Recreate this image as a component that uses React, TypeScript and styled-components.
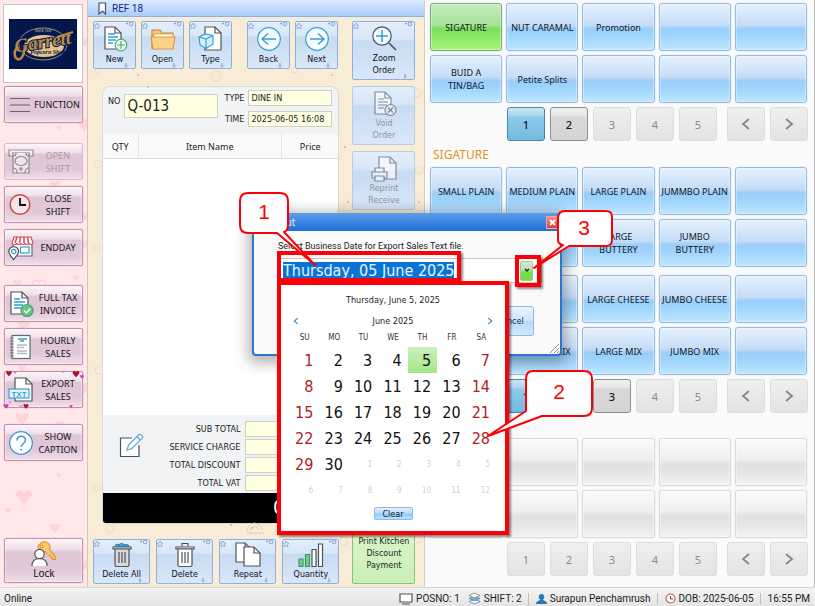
import React from "react";
import styled, { createGlobalStyle, css } from "styled-components";

const UI = `"DejaVu Sans Condensed", "Noto Sans", sans-serif`;
const LABEL = `"Noto Sans", "Open Sans", sans-serif`;
const WIDE = `"DejaVu Sans", sans-serif`;
const NARROW = `Roboto, "Noto Sans", sans-serif`;

const Global = createGlobalStyle`
  * { box-sizing: border-box; }
  html, body { margin: 0; padding: 0; }
  body { font-family: ${UI}; font-size: 9px; color: #1c1c24; background: #fafafa; }
  button, input { font: inherit; color: inherit; }
  button { cursor: pointer; padding: 0; margin: 0; }
  svg { display: block; flex: none; }
`;

const Screen = styled.div`
  position: relative;
  min-height: 100vh;
  display: flex;
  flex-direction: column;
  overflow: hidden;
`;
const Main = styled.main`
  flex: 1;
  display: grid;
  grid-template-columns: 88px minmax(0, 337fr) minmax(0, 390fr);
`;

/* ---------- sidebar ---------- */
const Sidebar = styled.nav`
  position: relative;
  display: flex;
  flex-direction: column;
  gap: 6px;
  padding: 4px 4px 4px 4px;
  background: #ffe8e9;
  border-right: 1px solid #d5c6b8;
`;
const Decor = styled.svg`
  position: absolute;
  inset: 0;
  width: 100%;
  height: 100%;
  pointer-events: none;
`;
const LogoBox = styled.div`
  position: relative;
  height: 79px;
  margin: 0 0 -3px -1px;
  width: 80px;
  background: #fff;
  border: 1px solid #cfc0c4;
  display: flex;
  align-items: center;
  justify-content: center;
`;
const SideButton = styled.button<{ $tall?: boolean; $gap?: number }>`
  position: relative;
  width: 79px;
  height: ${(p) => (p.$tall ? 45 : 37)}px;
  margin-top: ${(p) => p.$gap ?? 0}px;
  display: flex;
  flex-direction: ${(p) => (p.$tall ? "column" : "row")};
  align-items: center;
  justify-content: ${(p) => (p.$tall ? "center" : "flex-start")};
  padding: 0 2px 0 3px;
  gap: ${(p) => (p.$tall ? 0 : 2)}px;
  border: 1px solid #c08fae;
  border-radius: 2px;
  background: linear-gradient(#fdf5f9 0%, #f0dfe9 24%, #dfc6d6 30%, #e0c8d8 72%, #f0dfea 100%);
  box-shadow: inset 0 0 0 1px rgba(255, 255, 255, 0.4), 0 0 1px #b98aa6;
  color: #14101c;
  font-family: ${LABEL};
  font-size: ${(p) => (p.$tall ? 10 : 9)}px;
  line-height: 13px;
  &:disabled {
    color: #b397a6;
    border-color: #d9b9cb;
    box-shadow: none;
    svg { opacity: 0.55; }
  }
`;
const SideLabel = styled.span`
  flex: 1;
  text-align: center;
  white-space: pre-line;
`;
const Spacer = styled.div`
  flex: 1;
`;
const Sparkle = styled.svg`
  position: absolute;
  inset: -2px;
  width: calc(100% + 4px);
  height: calc(100% + 4px);
  pointer-events: none;
`;

/* ---------- order area ---------- */
const OrderArea = styled.section`
  position: relative;
  display: flex;
  flex-direction: column;
  background: #f8ecd6;
  border-right: 1px solid #d8cdbb;
`;
const RefBar = styled.header`
  height: 17px;
  display: flex;
  align-items: center;
  gap: 5px;
  padding-left: 10px;
  background: linear-gradient(#dcebff, #a9cdfb);
  border-bottom: 1px solid #86b3ec;
  color: #14278c;
  font-family: ${NARROW};
  font-size: 10px;
`;
const OrderBody = styled.div`
  position: relative;
  flex: 1;
  display: flex;
  gap: 13px;
  padding: 4px 9px 3px 5px;
`;
const OrderLeft = styled.div`
  flex: 1;
  display: flex;
  flex-direction: column;
`;
const OrderRight = styled.div`
  width: 63px;
  display: flex;
  flex-direction: column;
  gap: 6px;
`;
const Row = styled.div<{ $gap?: number }>`
  display: flex;
  gap: ${(p) => p.$gap ?? 5}px;
`;
const Group = styled.div`
  display: flex;
  gap: 5px;
  margin-right: 10px;
`;
const toolSizes = {
  small: css`width: 43px; height: 48px;`,
  tall: css`width: 63px; height: 59px;`,
  wide: css`flex: 1; height: 45px;`,
};
const Tool = styled.button<{ $size: keyof typeof toolSizes }>`
  position: relative;
  ${(p) => toolSizes[p.$size]}
  display: flex;
  flex-direction: column;
  align-items: center;
  justify-content: center;
  gap: 1px;
  border: 1px solid #8fb0dc;
  border-radius: 2px;
  background: linear-gradient(#e3eefb 0%, #d8e6f8 30%, #c8dbf3 34%, #d9e7f9 100%);
  font-family: ${WIDE};
  font-size: 8px;
  line-height: 12px;
  white-space: pre-line;
  color: #10131a;
  &:disabled {
    color: #8d95a3;
    border-color: #b9cce6;
    svg { opacity: 0.6; }
  }
`;
const PayButton = styled.button`
  height: 60px;
  border: 1px solid #93bd7c;
  border-radius: 2px;
  background: linear-gradient(#daf5cb, #c9efb8);
  font-family: ${WIDE};
  font-size: 8px;
  line-height: 12px;
  white-space: pre;
  color: #20281c;
`;
const Corner = styled.svg`
  position: absolute;
  inset: 0;
  width: 100%;
  height: 100%;
`;

const Ticket = styled.div`
  flex: 1;
  margin: 17px 0 15px 9px;
  display: flex;
  flex-direction: column;
  border: 1px solid #d9d9d9;
  border-radius: 8px 8px 4px 4px;
  background: #f2f3f4;
  overflow: hidden;
`;
const TicketHead = styled.div`
  height: 47px;
  display: flex;
  gap: 4px;
  padding: 3px 6px 0 5px;
`;
const NoField = styled.label`
  display: flex;
  gap: 4px;
  padding-top: 4px;
  line-height: 14px;
`;
const FieldGrid = styled.div`
  flex: 1;
  display: grid;
  grid-template-columns: 22px 1fr;
  grid-auto-rows: 16px;
  row-gap: 5px;
  column-gap: 4px;
  align-items: center;
  font-size: 9px;
  label { text-align: right; }
`;
const Field = styled.input<{ $big?: boolean }>`
  min-width: 0;
  width: ${(p) => (p.$big ? 94 : 84)}px;
  height: ${(p) => (p.$big ? 24 : 16)}px;
  padding: 0 2px;
  border: 1px solid #cfd0c4;
  border-radius: 0;
  background: #ffffe1;
  font-size: ${(p) => (p.$big ? 15 : 9)}px;
`;
const Lines = styled.table`
  width: 100%;
  height: 25px;
  border-collapse: collapse;
  table-layout: fixed;
  background: #fafafa;
  font-family: ${LABEL};
  font-size: 9px;
  th {
    font-weight: 400;
    padding: 0;
    border-right: 1px solid #e4e4e4;
    border-bottom: 1px solid #dcdcdc;
  }
  th:first-child { width: 35px; }
  th:last-child { width: 57px; border-right: 0; }
`;
const LinesBody = styled.div`
  flex: 1;
  background: #fff;
`;
const Totals = styled.div`
  height: 78px;
  display: flex;
  align-items: center;
  padding: 3px 5px 0 16px;
`;
const IconButton = styled.button`
  border: 0;
  background: none;
  margin-bottom: 20px;
`;
const TotalsGrid = styled.div`
  flex: 1;
  display: grid;
  grid-template-columns: 1fr 88px;
  grid-auto-rows: 16px;
  gap: 2px 5px;
  align-items: center;
  label { text-align: right; white-space: nowrap; }
`;
const GrandTotal = styled.output`
  height: 30px;
  padding: 0 0 0 170px;
  background: #000;
  color: #fff;
  font-size: 20px;
  line-height: 28px;
`;

/* ---------- menu area ---------- */
const MenuArea = styled.section`
  display: flex;
  flex-direction: column;
  padding: 3px 7px 11px 5px;
  background: #fafafa;
  border-right: 1px solid #b9b9c0;
`;
const Tiles = styled.div<{ $loose?: boolean }>`
  display: grid;
  grid-template-columns: repeat(5, minmax(0, 1fr));
  grid-auto-rows: 48px;
  gap: 4px;
  margin-bottom: ${(p) => (p.$loose ? 8 : 4)}px;
`;
type Tone = "blue" | "green" | "gray";
const tones: Record<Tone, ReturnType<typeof css>> = {
  blue: css`
    border-color: #93bbe8;
    background: linear-gradient(#e6f1fd 0%, #c3dcf7 46%, #9bcdf9 54%, #9dd3fc 68%, #bfe6ff 100%);
  `,
  green: css`
    border-color: #75b06f;
    background: linear-gradient(#c6ecc0 0%, #a5e297 46%, #7ddd5c 54%, #8ae768 70%, #aaf57c 100%);
  `,
  gray: css`
    border-color: #dcdcdc;
    background: linear-gradient(#fbfbfb 0%, #eeeeee 46%, #e0e0e0 54%, #e6e6e6 75%, #f3f3f3 100%);
  `,
};
const Tile = styled.button<{ $tone: Tone }>`
  border: 1px solid;
  border-radius: 3px;
  ${(p) => tones[p.$tone]}
  box-shadow: inset 0 0 0 1px rgba(255, 255, 255, 0.35), 0 0 1px rgba(110, 150, 200, 0.6);
  font-family: ${LABEL};
  font-size: 9px;
  line-height: 13px;
  white-space: pre;
  color: #10161e;
`;
const Category = styled.h2`
  margin: 5px 0 3px 3px;
  height: 18px;
  font-family: ${LABEL};
  font-size: 12px;
  font-weight: 400;
  line-height: 18px;
  color: #e0912c;
`;
const Pager = styled.div`
  display: grid;
  grid-template-columns: repeat(5, 38fr) 0 repeat(2, 38fr);
  gap: 5px;
  margin: 0 -1px 0 77px;
`;
const pageStates = {
  current: css`
    border-color: #4f83a3;
    background: linear-gradient(#cbe7f6 0%, #a9d6ee 24%, #8ccbea 28%, #74b9df 100%);
    color: #10161e;
  `,
  ready: css`
    border-color: #8f8f8f;
    background: linear-gradient(#f1f1f1 0%, #e6e6e6 24%, #d8d8d8 28%, #d5d5d5 100%);
    color: #10161e;
  `,
  off: css`
    border-color: #dddddd;
    background: linear-gradient(#efefef, #e3e3e3);
    color: #8b8b8b;
  `,
};
type PageState = keyof typeof pageStates;
const PageButton = styled.button<{ $state: PageState }>`
  height: 34px;
  border: 1px solid;
  border-radius: 3px;
  ${(p) => pageStates[p.$state]}
  display: flex;
  align-items: center;
  justify-content: center;
  font-family: ${LABEL};
  font-size: 11px;
  font-weight: ${(p) => (p.$state === "off" ? 400 : 500)};
`;

/* ---------- status bar ---------- */
const StatusBar = styled.footer`
  height: 19px;
  display: flex;
  align-items: center;
  padding: 3px 5px 0 4px;
  background: linear-gradient(#f4f4f4, #e4e4e4);
  border-top: 1px solid #d6d6d6;
  font-family: ${NARROW};
  font-size: 10px;
  white-space: nowrap;
`;
const StatusItem = styled.span<{ $rule?: boolean }>`
  display: flex;
  align-items: center;
  gap: 3px;
  padding: 0 6px 0 ${(p) => (p.$rule ? 7 : 2)}px;
  border-left: ${(p) => (p.$rule ? "1px solid #bdbdbd" : "0")};
  &:last-child { padding-right: 0; }
`;

/* ---------- dialog ---------- */
const Dialog = styled.div`
  position: absolute;
  left: 252px;
  top: 213px;
  width: 310px;
  height: 143px;
  display: flex;
  flex-direction: column;
  border: 2px solid #2f74d0;
  border-top: 0;
  border-radius: 4px;
  background: #fafafa;
  box-shadow: 0 3px 14px 4px rgba(0, 0, 0, 0.3);
`;
const TitleBar = styled.div`
  height: 18px;
  margin: 0 -2px;
  padding: 0 3px 0 20px;
  display: flex;
  align-items: center;
  justify-content: space-between;
  border-radius: 4px 4px 0 0;
  background: linear-gradient(#5c9deb, #1f6fd8);
  color: #e8f1fc;
  font-size: 10px;
`;
const CloseButton = styled.button`
  width: 13px;
  height: 13px;
  display: flex;
  align-items: center;
  justify-content: center;
  border: 1px solid #f3a7a4;
  background: linear-gradient(#ee8e8a, #d6403d);
`;
const DialogBody = styled.div`
  flex: 1;
  display: flex;
  flex-direction: column;
  padding: 9px 18px 18px 24px;
`;
const DateLabel = styled.label`
  font-family: ${NARROW};
  line-height: 13px;
  white-space: nowrap;
`;
const DateBox = styled.div`
  display: flex;
  align-items: center;
  height: 25px;
  margin-top: 5px;
  padding: 1px 8px 1px 4px;
  background: #fff;
  border: 1px solid #c5c5c5;
`;
const DateInput = styled.div`
  flex: 1;
  display: flex;
  input {
    width: 171px;
    height: 18px;
    padding: 0;
    border: 0;
    background: #0a74d6;
    color: #e9f4ff;
    font-family: ${UI};
    font-size: 16px;
  }
`;
const DropButton = styled.button`
  width: 13px;
  height: 20px;
  display: flex;
  align-items: center;
  justify-content: center;
  border: 1px solid #a3c69a;
  border-radius: 2px;
  background: linear-gradient(#d5edcc 0%, #b5dfa4 45%, #7fda55 55%, #6fe03c 100%);
`;
const CancelButton = styled.button`
  align-self: flex-end;
  width: 48px;
  height: 30px;
  margin: auto 8px 0 0;
  border: 1px solid #8fb8e6;
  border-radius: 3px;
  background: linear-gradient(#edf5fe, #cfe4fb 48%, #b5d8fa 52%, #cfebff);
  color: #22303f;
`;
const Grip = styled.svg`
  position: absolute;
  right: 1px;
  bottom: 1px;
`;
const Calendar = styled.div`
  position: absolute;
  left: 281px;
  top: 285px;
  width: 224px;
  height: 246px;
  display: flex;
  flex-direction: column;
  align-items: center;
  padding: 9px 9px 0;
  background: #fff;
`;
const CalTitle = styled.div`
  line-height: 13px;
`;
const CalNav = styled.div`
  align-self: stretch;
  display: flex;
  justify-content: space-between;
  align-items: center;
  height: 14px;
  margin-top: 7px;
  button {
    width: 12px;
    height: 12px;
    display: flex;
    align-items: center;
    justify-content: center;
    border: 0;
    background: none;
  }
`;
const Days = styled.table`
  width: 206px;
  table-layout: fixed;
  border-collapse: collapse;
  th {
    height: 19px;
    padding: 0;
    font-weight: 400;
    font-size: 8px;
    color: #333;
  }
  td { padding: 0; height: 26px; }
`;
const Day = styled.button<{ $weekend: boolean; $other: boolean; $picked: boolean }>`
  width: 100%;
  height: 26px;
  padding: 0 6px 0 0;
  border: 0;
  text-align: right;
  font-size: ${(p) => (p.$other ? 8 : 16)}px;
  color: ${(p) => (p.$other ? "#cfcfcf" : p.$weekend ? "#b01c22" : "#101010")};
  background: ${(p) => (p.$picked ? "linear-gradient(#c9f1bd, #a5e588)" : "none")};
`;
const ClearButton = styled.button`
  width: 39px;
  height: 13px;
  margin-top: 4px;
  border: 1px solid #8fb8e6;
  border-radius: 2px;
  background: linear-gradient(#e3f0fd, #b9dbfa 45%, #8fcbf8 55%, #b7e2ff);
  line-height: 10px;
`;

/* ---------- callouts ---------- */
const Frame = styled.div<{ $x: number; $y: number; $w: number; $h: number }>`
  position: absolute;
  left: ${(p) => p.$x}px;
  top: ${(p) => p.$y}px;
  width: ${(p) => p.$w}px;
  height: ${(p) => p.$h}px;
  border: 4px solid #fb0007;
  box-shadow: 2px 2px 2px rgba(0, 0, 0, 0.45);
  pointer-events: none;
`;
const Callout = styled.svg<{ $x: number; $y: number }>`
  position: absolute;
  left: ${(p) => p.$x}px;
  top: ${(p) => p.$y}px;
  overflow: visible;
  pointer-events: none;
  path { fill: #fff; stroke: #fb0007; stroke-width: 2; stroke-linejoin: round; }
  text {
    fill: #fb0007;
    font-family: "Liberation Sans", sans-serif;
    font-size: 21px;
    text-anchor: middle;
  }
`;

/* ---------- icons ---------- */
const ink = "#4f5359";
const sky = "#3a9fd0";
const Svg = ({ w, h, children }: { w: number; h: number; children: React.ReactNode }) => (
  <svg width={w} height={h} viewBox={`0 0 ${w} ${h}`} fill="none" stroke={ink} strokeWidth="1.2" aria-hidden="true">
    {children}
  </svg>
);

const FunctionIcon = () => (
  <Svg w={24} h={24}><path d="M2 5.5h20M2 12h20M2 18.500h20" stroke="#6d6470" /></Svg>
);
const OpenShiftIcon = () => (
  <Svg w={26} h={26}>
    <path d="M5 7H1V1h24v6h-4" fill="#fff" /><path d="M4 4h18" />
    <path d="M5 4v20h16V4" fill="#fff" /><ellipse cx="13" cy="12" rx="6" ry="4.500" />
    <path d="M5 19c3 0 4 2 4 5M21 19c-3 0-4 2-4 5M5 7c2 0 3-1 3-3M21 7c-2 0-3-1-3-3" /><circle cx="13" cy="20" r="1.200" />
  </Svg>
);
const ClockIcon = () => (
  <Svg w={26} h={26}>
    <circle cx="12" cy="12.500" r="9.800" stroke="#cf4a38" strokeWidth="1.500" fill="#f4e6ec" />
    <path d="M12 6v7h6" stroke="#111" strokeWidth="1.800" />
  </Svg>
);
const StoreIcon = () => (
  <Svg w={26} h={26}>
    <path d="M5 10v11h19V10" fill="#f6f8fa" stroke="#6a6f75" />
    <rect x="12.500" y="12" width="8.500" height="6" fill="#fff" stroke={sky} />
    <path d="M6 2h17l2 6c0 2-4 2-4 0 0 2-4 2-4 0 0 2-4 2-4 0 0 2-4 2-4 0 0 2-5 2-5 0z" fill="#fff" stroke="#d5454a" />
    <path d="M9 2 7 8M12.500 2l-1 6M16 2v6M19.500 2l1 6" stroke="#d5454a" strokeWidth="1.500" />
    <path d="M5.500 24.500C2.500 21 .8 19 .8 16.500a4.900 4.900 0 0 1 9.800 0c0 2.500-2 4.500-5.100 8z" fill="#fff" />
    <circle cx="5.700" cy="16.500" r="2.200" stroke={sky} />
  </Svg>
);
const Page = ({ x = 0, y = 0, w = 17, h = 23 }) => (
  <>
    <path d={`M${x} ${y}h${w - 6}l6 6v${h - 6}h${-w}z`} fill="#fff" />
    <path d={`M${x + w - 6} ${y}v6h6`} />
  </>
);
const InvoiceIcon = () => (
  <Svg w={26} h={26}>
    <Page x={3} y={1} w={17} h={22} />
    <path d="M6 8h6M6 11h11M6 14h9M6 17h7" stroke={sky} strokeWidth="1.300" />
    <circle cx="19" cy="19.500" r="6" fill="#69c189" stroke="#4aa56c" />
    <path d="m16 19.500 2.300 2.500 4-4.500" stroke="#fff" strokeWidth="1.500" />
  </Svg>
);
const HourlyIcon = () => (
  <Svg w={26} h={26}>
    <rect x="4" y="1.500" width="18" height="23" fill="#fff" stroke="#666a70" />
    <path d="M2 4h4M2 7h4M2 10h4M2 13h4M2 16h4M2 19h4M2 22h4" stroke="#77797f" strokeWidth="1" />
    <path d="M10 5h9M12 7h4" stroke={sky} strokeWidth="1.500" />
    <path d="M9 11h10M9 13.500h7M9 17h10M9 19.500h10" stroke="#b7babe" strokeWidth="1.500" />
  </Svg>
);
const TxtIcon = () => (
  <Svg w={26} h={26}>
    <Page x={7} y={1} w={17} h={23} />
    <rect x="1" y="12" width="20" height="9" fill="#e8f6fc" stroke={sky} />
    <text x="11" y="19.500" fontSize="8" fontWeight="700" fontFamily="Liberation Sans" textAnchor="middle" fill={sky} stroke="none">TXT</text>
  </Svg>
);
const HelpIcon = () => (
  <Svg w={26} h={26}>
    <circle cx="13" cy="13" r="11.300" fill="#fff" stroke="#3d94cd" />
    <path d="M9 10.500c0-5.500 8.500-5.500 8.500-.5 0 3.500-4.300 3.500-4.300 7" stroke="#3d94cd" strokeWidth="1.500" />
    <circle cx="13.200" cy="19.800" r="1" fill="#3d94cd" stroke="none" />
  </Svg>
);
const LockIcon = () => (
  <Svg w={26} h={26}>
    <path d="M10 2a5.500 5.500 0 0 1 8.500 6.500l6 7v3h-3v-2h-2v-2h-2l-3-4A5.500 5.500 0 0 1 7 5z" fill="#f8c86c" stroke="#e09a3c" />
    <circle cx="10.500" cy="5.500" r="1.300" fill="#fff" stroke="#e09a3c" />
    <path d="M1 25c0-5 2.500-7.500 7.500-7.500S16 20 16 25" fill="#fff" />
    <circle cx="8.500" cy="13" r="4.700" fill="#fff" />
  </Svg>
);
const NewIcon = () => (
  <Svg w={26} h={28}>
    <Page x={3} y={2} w={16} h={22} />
    <path d="M6 9h7M6 12h10M6 15h8M6 18h5" stroke={sky} strokeWidth="1.300" />
    <circle cx="19" cy="20" r="5.800" fill="#f3fbf5" stroke="#45b06c" /><path d="M19 16v8M15 20h8" stroke="#45b06c" />
  </Svg>
);
const OpenIcon = () => (
  <Svg w={26} h={28}>
    <path d="M2 24V5h8l2 3h11v4" fill="#f5c877" stroke="#d48a35" />
    <path d="M4 9h19v14H3z" fill="#fff" stroke="#d48a35" strokeWidth=".7" />
    <path d="M1 12h24l-2 12H3z" fill="#fad386" stroke="#dd9642" />
  </Svg>
);
const TypeIcon = () => (
  <Svg w={26} h={28}>
    <Page x={7} y={2} w={16} h={23} />
    <path d="m1 12 6-3 8 1.500V19l-7 4.500-6-3.500z" fill="#d7f0fb" stroke={sky} />
    <path d="m1 12 7 2 7-3.500M8 14v9.500" stroke={sky} />
  </Svg>
);
const ArrowIcon = ({ flip = false }) => (
  <Svg w={26} h={28}>
    <circle cx="13" cy="14" r="11.300" fill="#f7fbff" stroke={sky} />
    <path d={flip ? "M6 14h14m-6-5.500 6 5.500-6 5.500" : "M20 14H6m6-5.500L6 14l6 5.500"} stroke={sky} strokeWidth="1.400" />
  </Svg>
);
const ZoomIcon = () => (
  <Svg w={26} h={27}>
    <circle cx="11" cy="11" r="9.200" fill="#f2f8fe" /><path d="m18 18 7 7" strokeWidth="1.600" />
    <path d="M11 5v12M5 11h12" stroke={sky} strokeWidth="1.500" />
  </Svg>
);
const VoidIcon = () => (
  <Svg w={26} h={27}>
    <Page x={4} y={2} w={16} h={22} />
    <path d="M7 9h6M7 12h10M7 15h9M7 18h6" /><circle cx="19.500" cy="20" r="5.500" fill="#eef2f8" />
    <path d="m17 17.500 5 5m0-5-5 5" />
  </Svg>
);
const ReprintIcon = () => (
  <Svg w={26} h={27}>
    <Page x={8} y={2} w={17} h={22} />
    <path d="M4 17v-4h9v4" fill="#fff" /><path d="M1 17h15v6H1z" fill="#fff" /><path d="M4 21h9v5H4z" fill="#fff" />
  </Svg>
);
const EditIcon = () => (
  <Svg w={25} h={25}>
    <path d="M13 5H1.500v18.500H20V12" fill="#fff" />
    <path d="m8 17 1.500-5L20 1.500c1-1 4.500 2 3.500 3.300L13 15.500z" fill="#fff" stroke="#5ba6dc" /><path d="m18 3.500 3.500 3.500" stroke="#5ba6dc" />
  </Svg>
);
const TrashIcon = ({ full = false }) => (
  <Svg w={22} h={26}>
    {full ? (
      <path d="M4 5c0-3 3-3 4-2 1-2 4-2 5 0 2-1 5 0 5 2z" fill="#4ba9dd" stroke="#2d83b8" />
    ) : (
      <path d="M8 4V1.500h6V4" />
    )}
    <path d="M2 5h18v2H2z" fill="#fff" />
    <path d="M4 7h14v16q0 1.500-1.500 1.500h-11Q4 24.500 4 23z" fill={full ? "#d9d9da" : "#fff"} />
    <path d="M8 10v11M11 10v11M14 10v11" />
  </Svg>
);
const RepeatIcon = () => (
  <Svg w={26} h={26}><Page x={1} y={1} w={15} h={19} /><Page x={9} y={5} w={16} h={19} /></Svg>
);
const QuantityIcon = () => (
  <Svg w={26} h={26}>
    <path d="M1 17h4v7.500H1zM7.500 12.500h4v12h-4z" fill="#74cb93" stroke="#379a5e" />
    <path d="M14 7.500h4v17h-4zM20.500 2h4v22.500h-4z" fill="#fff" />
  </Svg>
);
const BookmarkIcon = () => (
  <Svg w={9} h={13}><path d="M1 1h6.500v11L4.300 9 1 12z" fill="#fff" /></Svg>
);
const ScreenIcon = () => (
  <Svg w={14} h={12}><path d="M1 1h12v8H1zM3 11h8" fill="#fff" /></Svg>
);
const LayersIcon = () => (
  <Svg w={13} h={13}>
    <path d="m6.500 7 5.500 2.500-5.500 2.500L1 9.500z" fill="#fff" stroke="#777" strokeWidth=".8" />
    <path d="m6.500 4 5.500 2.500L6.500 9 1 6.500z" fill="#6db5e2" stroke="#4a8fc0" strokeWidth=".8" />
    <path d="m6.500 1 5.500 2.500L6.500 6 1 3.500z" fill="#fff" stroke="#777" strokeWidth=".8" />
  </Svg>
);
const UserIcon = () => (
  <Svg w={11} h={12}>
    <path d="M5.500 1a3 3 0 0 1 1.500 5.500c0 1.500 4 1 4 4.500H0c0-3.500 4-3 4-4.500A3 3 0 0 1 5.500 1z" fill="#2878b8" stroke="none" />
  </Svg>
);
const SmallClock = () => (
  <Svg w={11} h={11}><circle cx="5.500" cy="5.500" r="4.500" stroke="#c4604f" fill="#fff" /><path d="M5.500 3v3H8" strokeWidth="1" /></Svg>
);
const Chevron = ({ dir, size = 14, color = "#868686" }: { dir: "left" | "right"; size?: number; color?: string }) => (
  <svg width={size} height={size} viewBox="0 0 14 14" fill="none" stroke={color} strokeWidth="1.800" aria-hidden="true">
    <path d={dir === "left" ? "M10 2 4 7l6 5" : "m4 2 6 5-6 5"} />
  </svg>
);

const HEART = "M0 3C-3-3-11 1-7 7-5 10-2 12 0 15 2 12 5 10 7 7 11 1 3-3 0 3z";
const Hearts = () => (
  <Decor aria-hidden="true">
    {[
      [24, 490, 1], [8, 508, 0.4], [55, 524, 0.6], [59, 473, 0.3], [55, 181, 0.6], [85, 212, 0.6], [84, 118, 0.9],
      [17, 280, 0.5], [76, 275, 0.4], [84, 240, 0.6], [24, 319, 0.8], [22, 365, 0.5], [22, 413, 0.8], [84, 382, 0.8],
      [60, 421, 0.5], [84, 560, 0.7], [59, 126, 0.3], [84, 38, 0.6],
    ].map(([x, y, s], i) => (
      <path key={i} d={HEART} transform={`translate(${x} ${y}) scale(${s})`} fill="#ffd3d7" />
    ))}
    <path d={HEART} transform="translate(39 280) scale(.8)" fill="none" stroke="#ffd3d7" strokeWidth="2" />
  </Decor>
);
const Shells = () => (
  <Decor aria-hidden="true" fill="none" stroke="#ecdcc9">
    {[[10, 54, 3], [10, 147, 4], [9, 231, 3], [11, 353, 4], [9, 471, 3], [22, 512, 4], [128, 59, 5], [206, 53, 3], [329, 76, 4], [331, 153, 4], [329, 522, 4], [256, 524, 4]].map(
      ([x, y, r], i) => (
        <circle key={i} cx={x} cy={y} r={r} />
      )
    )}
    <path d="M159 514c1-9 11-11 15-2M162 514c2-5 7-6 9-1M159 516h17" stroke="#dcc8b8" />
    {[[50, 58], [47, 38], [244, 58], [164, 511], [60, 70], [143, 508], [260, 185], [331, 185], [257, 130]].map(([x, y], i) => (
      <circle key={i} cx={x} cy={y} r="1" fill="#cdb9a8" stroke="none" />
    ))}
  </Decor>
);
const Ornament = () => (
  <Corner aria-hidden="true">
    <path d="m3 1 1 2 2 .3-1.500 1.300.4 2L3 5.700l-2 1 .4-2L0 3.400 2 3z" fill="none" stroke="#7fa2dc" strokeWidth=".8" />
    <svg x="100%" y="0" overflow="visible">
      <circle cx="-4" cy="2" r="1.800" fill="none" stroke="#7fa2dc" /><circle cx="-8" cy="1.500" r="1" fill="#7fa2dc" />
    </svg>
    <svg x="100%" y="100%" overflow="visible">
      <path d="M-9-5v3" stroke="#7fa2dc" /><circle cx="-9" cy="-2" r="1.500" fill="#9db9e6" />
    </svg>
  </Corner>
);
const ExportHearts = () => (
  <Sparkle aria-hidden="true">
    {[
      [6, 1, 0.35, "#b3122a"], [73, 1, 0.42, "#b3122a"], [23, 34, 0.32, "#b3122a"], [3, 34, 0.32, "#cc3fae"],
      [79, 5, 0.25, "#cc3fae"], [12, 1, 0.2, "#e06bc4"], [60, 1, 0.15, "#e06bc4"], [68, 35, 0.2, "#cc3fae"],
      [7, 31, 0.2, "#e79bd6"], [18, 35, 0.2, "#ee8fd0"],
    ].map(([x, y, s, f], i) => (
      <path key={i} d={HEART} transform={`translate(${x} ${y}) scale(${s})`} fill={String(f)} />
    ))}
  </Sparkle>
);
const Logo = () => (
  <svg width="68" height="50" viewBox="0 0 68 50" role="img" aria-label="Garrett Popcorn Shops">
    <rect width="68" height="50" fill="#04174c" />
    <ellipse cx="34" cy="25" rx="24" ry="16" fill="none" stroke="#b9ac8c" strokeWidth=".8" />
    <ellipse cx="35" cy="27" rx="20" ry="11" fill="#e3c58c" />
    <g fontFamily="Liberation Serif" fontStyle="italic" textAnchor="middle">
      <text x="34" y="29" fontSize="19" fontWeight="700" fill="#b98b45" stroke="#04174c" strokeWidth="2" paintOrder="stroke" transform="rotate(-9 34 25)">Garrett</text>
      <text x="40" y="35" fontSize="6" fontWeight="700" fill="#04174c">Popcorn Shops</text>
    </g>
    <path d="M9 28c-6 5-3 14 2 12 4-2 4-8 5-12" fill="none" stroke="#b98b45" strokeWidth="2.500" />
    <path d="M48 18 64 13" stroke="#b98b45" strokeWidth="2" />
    <text x="34" y="13" fontSize="3" textAnchor="middle" fill="#d9cdb0" fontFamily="Liberation Sans">SINCE 1949</text>
  </svg>
);

/* ---------- data ---------- */
const categories: [string, Tone][] = [
  ["SIGATURE", "green"], ["NUT CARAMAL", "blue"], ["Promotion", "blue"], ["", "blue"], ["", "blue"],
  ["BUID A\nTIN/BAG", "blue"], ["Petite Splits", "blue"], ["", "blue"], ["", "blue"], ["", "blue"],
];
const itemsTop = ["SMALL PLAIN", "MEDIUM PLAIN", "LARGE PLAIN", "JUMMBO PLAIN", "", "SMALL\nBUTTERY", "MEDIUM\nBUTTERY", "LARGE\nBUTTERY", "JUMBO\nBUTTERY", ""];
const itemsBottom = ["SMALL\nCHEESE", "MEDIUM\nCHEESE", "LARGE CHEESE", "JUMBO CHEESE", "", "SMALL MIX", "MEDIUM MIX", "LARGE MIX", "JUMBO MIX", ""];
const weekdays = ["SU", "MO", "TU", "WE", "TH", "FR", "SA"];
const weeks = Array.from({ length: 6 }, (_, r) => Array.from({ length: 7 }, (_, c) => r * 7 + c + 1));

const Pages = ({ states, label }: { states: PageState[]; label: string }) => (
  <Pager role="group" aria-label={label}>
    {states.map((s, i) => (
      <PageButton key={i} $state={s}>{i + 1}</PageButton>
    ))}
    <span />
    <PageButton $state="off" aria-label="Previous page"><Chevron dir="left" /></PageButton>
    <PageButton $state="off" aria-label="Next page"><Chevron dir="right" /></PageButton>
  </Pager>
);
const Side = ({ icon, label, ...rest }: { icon: React.ReactNode; label: string; $gap?: number; disabled?: boolean }) => (
  <SideButton {...rest}>
    {icon}
    <SideLabel>{label}</SideLabel>
  </SideButton>
);
const ToolButton = ({ icon, label, size = "small", disabled }: { icon: React.ReactNode; label: string; size?: keyof typeof toolSizes; disabled?: boolean }) => (
  <Tool $size={size} disabled={disabled}>
    {icon}
    {label}
    {!disabled && <Ornament />}
  </Tool>
);

export default function App() {
  return (
    <Screen>
      <Global />
      <Main>
        <Sidebar>
          <Hearts />
          <LogoBox><Logo /></LogoBox>
          <Side icon={<FunctionIcon />} label="FUNCTION" />
          <Side icon={<OpenShiftIcon />} label={"OPEN\nSHIFT"} $gap={14} disabled />
          <Side icon={<ClockIcon />} label={"CLOSE\nSHIFT"} />
          <Side icon={<StoreIcon />} label="ENDDAY" />
          <Side icon={<InvoiceIcon />} label={"FULL TAX\nINVOICE"} $gap={13} />
          <Side icon={<HourlyIcon />} label={"HOURLY\nSALES"} />
          <SideButton>
            <TxtIcon />
            <SideLabel>{"EXPORT\nSALES"}</SideLabel>
            <ExportHearts />
          </SideButton>
          <Side icon={<HelpIcon />} label={"SHOW\nCAPTION"} $gap={10} />
          <Spacer />
          <SideButton $tall><LockIcon />Lock</SideButton>
        </Sidebar>

        <OrderArea>
          <RefBar><BookmarkIcon />REF 18</RefBar>
          <OrderBody>
            <Shells />
            <OrderLeft>
              <Row $gap={5}>
                <Group>
                  <ToolButton icon={<NewIcon />} label="New" />
                  <ToolButton icon={<OpenIcon />} label="Open" />
                  <ToolButton icon={<TypeIcon />} label="Type" />
                </Group>
                <ToolButton icon={<ArrowIcon />} label="Back" />
                <ToolButton icon={<ArrowIcon flip />} label="Next" />
              </Row>
              <Ticket>
                <TicketHead>
                  <NoField>NO<Field $big defaultValue="Q-013" /></NoField>
                  <FieldGrid>
                    <label htmlFor="type">TYPE</label><Field id="type" defaultValue="DINE IN" />
                    <label htmlFor="time">TIME</label><Field id="time" defaultValue="2025-06-05 16:08" />
                  </FieldGrid>
                </TicketHead>
                <Lines><thead><tr><th>QTY</th><th>Item Name</th><th>Price</th></tr></thead></Lines>
                <LinesBody />
                <Totals>
                  <IconButton aria-label="Edit note"><EditIcon /></IconButton>
                  <TotalsGrid>
                    {["SUB TOTAL", "SERVICE CHARGE", "TOTAL DISCOUNT", "TOTAL VAT"].map((t, i) => (
                      <React.Fragment key={t}><label htmlFor={`sum${i}`}>{t}</label><Field id={`sum${i}`} readOnly /></React.Fragment>
                    ))}
                  </TotalsGrid>
                </Totals>
                <GrandTotal>0.00</GrandTotal>
              </Ticket>
              <Row $gap={6}>
                <ToolButton size="wide" icon={<TrashIcon full />} label="Delete All" />
                <ToolButton size="wide" icon={<TrashIcon />} label="Delete" />
                <ToolButton size="wide" icon={<RepeatIcon />} label="Repeat" />
                <ToolButton size="wide" icon={<QuantityIcon />} label="Quantity" />
              </Row>
            </OrderLeft>
            <OrderRight>
              <ToolButton size="tall" icon={<ZoomIcon />} label={"Zoom\nOrder"} />
              <ToolButton size="tall" icon={<VoidIcon />} label={"Void\nOrder"} disabled />
              <ToolButton size="tall" icon={<ReprintIcon />} label={"Reprint\nReceive"} disabled />
              <Spacer />
              <PayButton>{"Print Kitchen\nDiscount\nPayment"}</PayButton>
            </OrderRight>
          </OrderBody>
        </OrderArea>

        <MenuArea>
          <Tiles>{categories.map(([t, tone], i) => <Tile key={i} $tone={tone}>{t}</Tile>)}</Tiles>
          <Pages label="Category pages" states={["current", "ready", "off", "off", "off"]} />
          <Category>SIGATURE</Category>
          <Tiles $loose>{itemsTop.map((t, i) => <Tile key={i} $tone="blue">{t}</Tile>)}</Tiles>
          <Tiles>{itemsBottom.map((t, i) => <Tile key={i} $tone="blue">{t}</Tile>)}</Tiles>
          <Pages label="Item pages" states={["current", "ready", "ready", "off", "off"]} />
          <Spacer />
          <Tiles>{Array.from({ length: 10 }, (_, i) => <Tile key={i} $tone="gray" />)}</Tiles>
          <Pages label="Option pages" states={["off", "off", "off", "off", "off"]} />
        </MenuArea>
      </Main>

      <StatusBar>
        <span>Online</span>
        <Spacer />
        <StatusItem><ScreenIcon />POSNO: 1</StatusItem>
        <StatusItem><LayersIcon />SHIFT: 2</StatusItem>
        <StatusItem $rule><UserIcon />Surapun Penchamrush</StatusItem>
        <StatusItem $rule><SmallClock />DOB: 2025-06-05</StatusItem>
        <StatusItem $rule>16:55 PM</StatusItem>
      </StatusBar>

      <Dialog role="dialog" aria-label="Input">
        <TitleBar>
          Input
          <CloseButton aria-label="Close">
            <svg width="7" height="7" viewBox="0 0 7 7" stroke="#fff" strokeWidth="1.800"><path d="m1 1 5 5m0-5L1 6" /></svg>
          </CloseButton>
        </TitleBar>
        <DialogBody>
          <DateLabel htmlFor="date">Select Business Date for Export Sales Text file.</DateLabel>
          <DateBox>
            <DateInput><input id="date" defaultValue="Thursday, 05 June 2025" /></DateInput>
            <DropButton aria-label="Open calendar">
              <svg width="6" height="5" viewBox="0 0 6 5" fill="none" stroke="#123" strokeWidth="1.300"><path d="m1 1 2 2 2-2" /></svg>
            </DropButton>
          </DateBox>
          <CancelButton>Cancel</CancelButton>
        </DialogBody>
        <Grip width="9" height="9" stroke="#8d8d8d"><path d="M0 9 9 0M4 9l5-5M7 9l2-2" /></Grip>
      </Dialog>

      <Frame $x={515} $y={255} $w={26} $h={32} />
      <Frame $x={277} $y={251} $w={184} $h={31} />
      <Calendar>
        <CalTitle>Thursday, June 5, 2025</CalTitle>
        <CalNav>
          <button aria-label="Previous month"><Chevron dir="left" size={8} color="#2a7fc9" /></button>
          June 2025
          <button aria-label="Next month"><Chevron dir="right" size={8} color="#2a7fc9" /></button>
        </CalNav>
        <Days>
          <thead><tr>{weekdays.map((d) => <th key={d}>{d}</th>)}</tr></thead>
          <tbody>
            {weeks.map((w, r) => (
              <tr key={r}>
                {w.map((n, c) => (
                  <td key={n}>
                    <Day $weekend={c === 0 || c === 6} $other={n > 30} $picked={n === 5}>{n > 30 ? n - 30 : n}</Day>
                  </td>
                ))}
              </tr>
            ))}
          </tbody>
        </Days>
        <ClearButton>Clear</ClearButton>
      </Calendar>
      <Frame $x={277} $y={281} $w={232} $h={254} />

      <Callout $x={239} $y={192} width="78" height="76">
        <path d="M9 1h32q8 0 8 8v23q0 7-4 8L76 73 38 41H9q-8 0-8-8V9q0-8 8-8z" />
        <text x="25" y="27">1</text>
      </Callout>
      <Callout $x={485} $y={370} width="108" height="68">
        <path d="M48 1h51q8 0 8 8v29q0 8-8 8H57L3 66 41 41V9q0-8 7-8z" />
        <text x="74" y="29">2</text>
      </Callout>
      <Callout $x={532} $y={210} width="80" height="62">
        <path d="M33 1h41q6 0 6 6v23q0 6-6 6H37L2 58 31 35q-5-1-5-5V8q0-7 7-7z" />
        <text x="52" y="25">3</text>
      </Callout>
    </Screen>
  );
}
